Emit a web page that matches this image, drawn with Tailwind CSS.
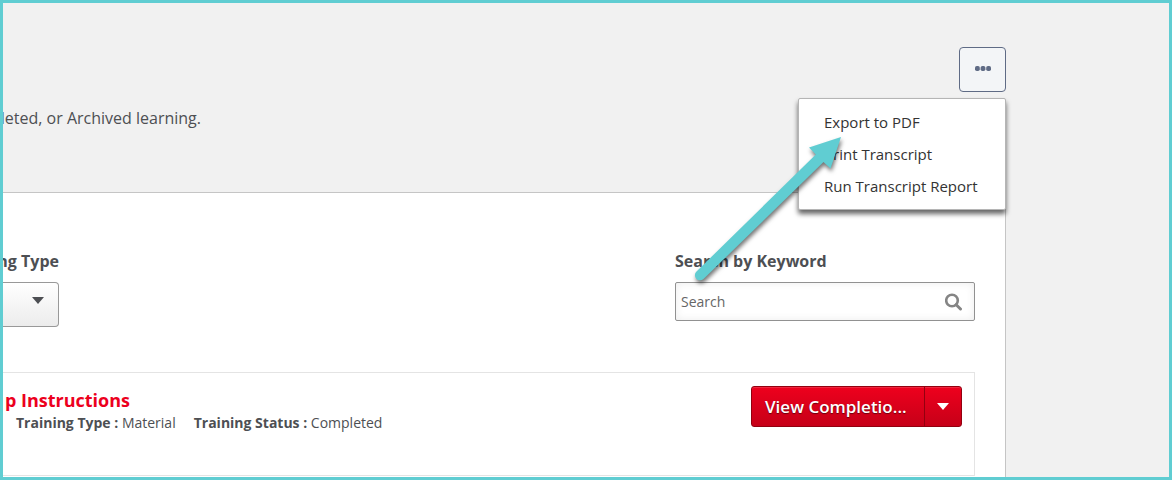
<!DOCTYPE html>
<html lang="en">
<head>
    <meta charset="UTF-8">
    <meta name="viewport" content="width=device-width, initial-scale=1.0">
    <title>Transcript</title>
    <script src="https://cdn.jsdelivr.net/npm/@tailwindcss/browser@4"></script>
</head>
<body class="bg-[#f1f1f1] font-['Open_Sans',sans-serif] text-[#4d4f53]">

    <div class="relative h-screen flex flex-col overflow-hidden border-3 border-[#60cdd2]">

        <!-- Header -->
        <header class="flex justify-between h-[189px] shrink-0 mr-[163px]">
            <p class="flex justify-end w-[198px] mt-[103px] h-6 whitespace-nowrap text-base leading-6">pleted, or Archived learning.</p>

            <div class="relative mt-11">
                <button id="menuButton" aria-label="More options" onclick="toggleMenu()" class="flex items-center justify-center w-[47px] h-[45px] rounded border border-[#5f6b85] bg-[#f3f5f7]">
                    <svg class="w-4 h-[5px] -mt-0.5" viewBox="0 0 16 5" fill="#5f6b85">
                        <rect x="0" y="0" width="4.8" height="5" rx="1.8" />
                        <rect x="5.6" y="0" width="4.8" height="5" rx="1.8" />
                        <rect x="11.2" y="0" width="4.8" height="5" rx="1.8" />
                    </svg>
                </button>

                <!-- Options menu -->
                <div id="menu" class="absolute z-10 right-0 top-[51px] w-52 pt-[7px] pb-[7px] rounded-xs border border-[#b5b5b5] bg-white text-[#333] shadow-[0_4px_5px_rgba(0,0,0,0.6)]">
                    <a href="#" class="block h-8 pl-[25px] text-[15px] leading-8 whitespace-nowrap">Export to PDF</a>
                    <a href="#" class="block h-8 pl-[25px] text-[15px] leading-8 whitespace-nowrap">Print Transcript</a>
                    <a href="#" class="block h-8 pl-[25px] text-[15px] leading-8 whitespace-nowrap">Run Transcript Report</a>
                </div>
            </div>
        </header>

        <!-- Transcript panel -->
        <main class="flex-1 mr-[163px] pr-[30px] border-t border-r border-[#c5c5c5] bg-white">

            <div class="flex justify-between pt-14">
                <div class="w-14">
                    <label for="trainingType" class="flex justify-end h-6 whitespace-nowrap text-base leading-6 font-bold">ng Type</label>
                    <div class="relative mt-[9px]">
                        <select id="trainingType" class="w-full h-[45px] appearance-none rounded-r border border-l-0 border-[#999] bg-linear-to-b from-white to-[#ececec]">
                            <option></option>
                        </select>
                        <svg class="absolute right-[15px] top-[15px] w-3 h-[7px] pointer-events-none" viewBox="0 0 12 7" fill="#4d4f53"><path d="M0 0h12L6 7z" /></svg>
                    </div>
                </div>

                <div class="w-[300px]">
                    <label for="keyword" class="block h-6 text-base leading-6 font-bold">Search by Keyword</label>
                    <div class="relative mt-[9px]">
                        <input id="keyword" type="text" placeholder="Search" class="block w-full h-[39px] pl-[5px] rounded-xs border border-[#919191] bg-white text-sm shadow-[inset_0_0_8px_rgba(0,0,0,0.08)] placeholder:text-[#666]">
                        <svg class="absolute right-3 top-[11px] w-[18px] h-[18px] pointer-events-none" viewBox="0 0 18 18" fill="none" stroke="#858585" stroke-width="2.6">
                            <circle cx="7" cy="7.500" r="5.8" />
                            <path d="M11.200 11.700l4.300 4.300" stroke-width="3" stroke-linecap="round" />
                        </svg>
                    </div>
                </div>
            </div>

            <!-- Training row -->
            <div class="flex justify-between h-[104px] mt-[45px] pr-3 border border-l-0 border-[#e4e4e4]">
                <div class="pt-3.5">
                    <h2 class="flex justify-end w-[127px] h-[26px] whitespace-nowrap text-lg leading-[26px] font-bold text-[#ec001d]">p Instructions</h2>
                    <p class="flex gap-[18px] pl-[13px] text-sm leading-5 whitespace-nowrap">
                        <span><b>Training Type :</b> Material</span>
                        <span><b>Training Status :</b> Completed</span>
                    </p>
                </div>

                <div class="flex mt-[13px] h-[41px] w-[211px] rounded-[3px] border border-[#93000f] bg-linear-to-b from-[#ee001d] to-[#c60018] text-white shadow-[inset_0_1px_0_rgba(255,255,255,0.15)]">
                    <button class="flex-1 min-w-0 pl-[13px] text-left text-[17px] font-semibold whitespace-nowrap text-shadow-[0_1px_1px_rgba(0,0,0,0.5)]">View Completio...</button>
                    <button aria-label="More actions" class="flex items-center justify-center w-[37px] border-l border-[#93000f]">
                        <svg class="w-3 h-[7px]" viewBox="0 0 12 7" fill="#fff"><path d="M0 0h12L6 7z" /></svg>
                    </button>
                </div>
            </div>
        </main>

        <!-- Arrow pointing at the export option -->
        <svg class="absolute z-20 left-[687px] top-[127px] w-[170px] h-[170px] pointer-events-none drop-shadow-[1px_3px_2px_rgba(0,0,0,0.55)]" viewBox="690 130 170 170" fill="#60cdd2">
            <path d="M841 137L809 147.500L815.800 154.500L696.500 271.500A5 5 0 0 0 703.500 279L823.500 162L830.500 168.500z" />
        </svg>
    </div>

    <script>
        // Show or hide the options menu
        function toggleMenu() {
            document.getElementById("menu").classList.toggle("hidden");
        }
    </script>

</body>
</html>
